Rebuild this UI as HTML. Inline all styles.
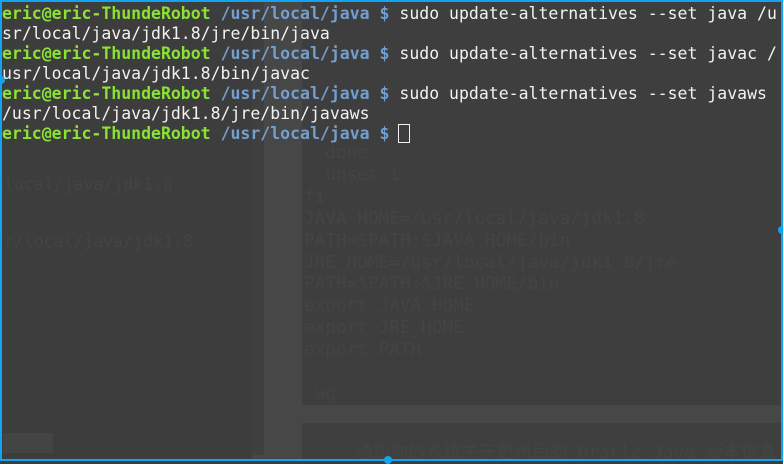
<!DOCTYPE html>
<html><head><style>
html,body{margin:0;padding:0;width:783px;height:461px;overflow:hidden;background:#3d3d3d}
.a{position:absolute}
pre{margin:0;font-family:"DejaVu Sans Mono","Liberation Mono",monospace;font-size:16.5px;line-height:20px;white-space:pre}
.g{color:#8ae234;font-weight:bold}.b{color:#729fcf;font-weight:bold}.w{color:#f2f2f2}
.gh{color:#444}
</style></head><body>
<div class="a" style="left:252px;top:0;width:531px;height:461px;background:#474747"></div>
<div class="a" style="left:252px;top:0;width:12px;height:455px;background:#404040"></div>
<div class="a" style="left:302px;top:0;width:481px;height:405px;background:#3e3e3e"></div>
<div class="a" style="left:302px;top:423px;width:481px;height:38px;background:#3f3f3f"></div>
<div class="a" style="left:3px;top:433px;width:50px;height:20px;background:#444"></div>
<pre class="a gh" style="left:4px;top:175px">local/java/jdk1.8</pre>
<pre class="a gh" style="left:4px;top:232px">r/local/java/jdk1.8</pre>
<pre class="a gh" style="left:304px;top:143px;font-size:17.7px;line-height:21.9px">  done
  unset i
fi
JAVA_HOME=/usr/local/java/jdk1.8
PATH=$PATH:$JAVA_HOME/bin
JRE_HOME=/usr/local/java/jdk1.8/jre
PATH=$PATH:$JRE_HOME/bin
export JAVA_HOME
export JRE_HOME
export PATH

:wq</pre>
<pre class="a gh" style="left:355px;top:443px;font-size:17.7px">通知你的系统关于更新后的 Oracle Java 版本信息</pre>
<pre class="a" style="left:2px;top:4px"><span class="g">eric@eric-ThundeRobot</span> <span class="b">/usr/local/java $</span><span class="w"> sudo update-alternatives --set java /u
sr/local/java/jdk1.8/jre/bin/java</span>
<span class="g">eric@eric-ThundeRobot</span> <span class="b">/usr/local/java $</span><span class="w"> sudo update-alternatives --set javac /
usr/local/java/jdk1.8/bin/javac</span>
<span class="g">eric@eric-ThundeRobot</span> <span class="b">/usr/local/java $</span><span class="w"> sudo update-alternatives --set javaws
/usr/local/java/jdk1.8/jre/bin/javaws</span>
<span class="g">eric@eric-ThundeRobot</span> <span class="b">/usr/local/java $</span></pre>
<div class="a" style="left:398px;top:124px;width:10px;height:17px;border:1px solid #f2f2f2"></div>
<div class="a" style="left:0;top:0;width:779px;height:457px;border:2px solid #12a4f0"></div>
<div class="a" style="left:-3px;top:76px;width:8px;height:8px;border-radius:4px;background:#12a4f0"></div>
<div class="a" style="left:778px;top:226px;width:8px;height:8px;border-radius:4px;background:#12a4f0"></div>
<div class="a" style="left:384px;top:456px;width:8px;height:8px;border-radius:4px;background:#12a4f0"></div>
</body></html>
